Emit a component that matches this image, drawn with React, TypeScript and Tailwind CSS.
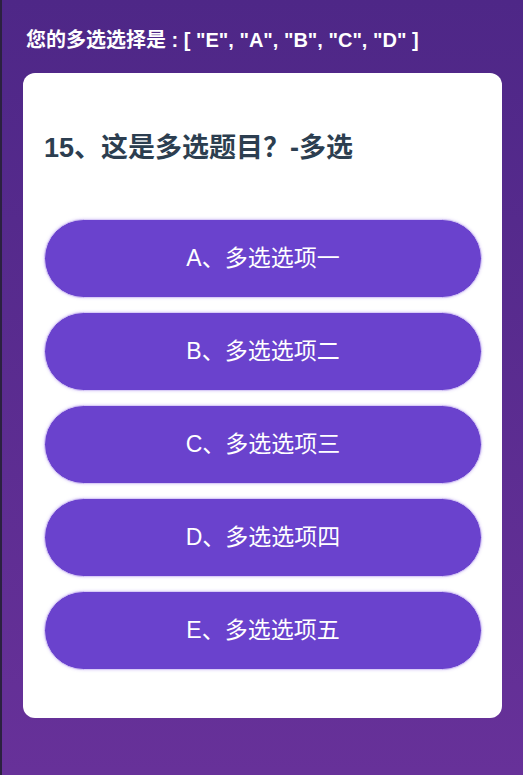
import React from "react";

const options = [
  "A、多选选项一",
  "B、多选选项二",
  "C、多选选项三",
  "D、多选选项四",
  "E、多选选项五",
];

export default function App() {
  return (
    <div
      className="min-h-[775px] w-full border-l-[2px] border-[#2b2140] bg-gradient-to-b from-[#4e2787] to-[#673199] pl-[21px] pr-[21px]"
      style={{ fontFamily: '"Liberation Sans", "Noto Sans CJK SC", sans-serif' }}
    >
      <div className="pt-[28px] pl-[3px] text-[20px] font-bold leading-[24px] text-white">
        您的多选选择是 : [ "E", "A", "B", "C", "D" ]
      </div>
      <div className="mt-[21px] rounded-[12px] bg-white pl-[21px] pr-[20px] pt-[57px] pb-[48px]">
        <div className="text-[27px] font-bold leading-[36px] text-[#2c3e50]">
          15、这是多选题目？-多选
        </div>
        <div className="mt-[53px] flex flex-col gap-[14px]">
          {options.map((o) => (
            <div
              key={o}
              className="flex h-[79px] items-center justify-center rounded-full border border-[#d9ccf7] bg-[#6a42cd] text-[23px] text-white shadow-[0_0_3px_rgba(140,100,230,0.35)]"
            >
              {o}
            </div>
          ))}
        </div>
      </div>
    </div>
  );
}
